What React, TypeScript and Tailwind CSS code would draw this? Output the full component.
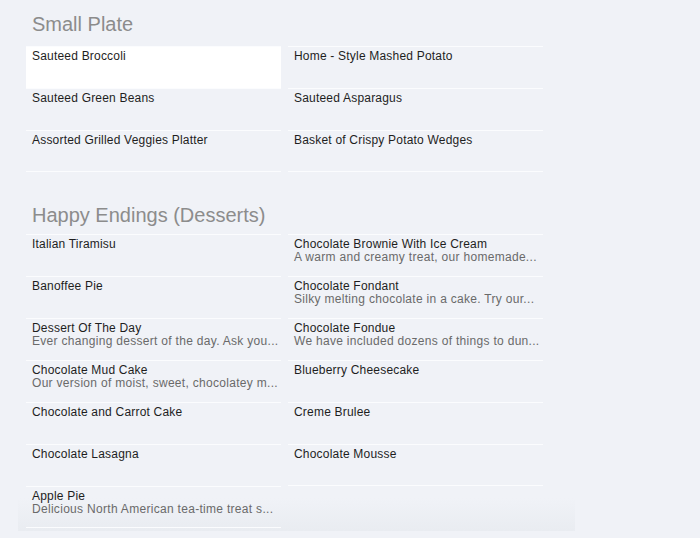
import React from "react";

type Item = { name: string; desc?: string };

const smallLeft: Item[] = [
  { name: "Sauteed Broccoli" },
  { name: "Sauteed Green Beans" },
  { name: "Assorted Grilled Veggies Platter" },
];
const smallRight: Item[] = [
  { name: "Home - Style Mashed Potato" },
  { name: "Sauteed Asparagus" },
  { name: "Basket of Crispy Potato Wedges" },
];
const dessertLeft: Item[] = [
  { name: "Italian Tiramisu" },
  { name: "Banoffee Pie" },
  { name: "Dessert Of The Day", desc: "Ever changing dessert of the day. Ask you..." },
  { name: "Chocolate Mud Cake", desc: "Our version of moist, sweet, chocolatey m..." },
  { name: "Chocolate and Carrot Cake" },
  { name: "Chocolate Lasagna" },
  { name: "Apple Pie", desc: "Delicious North American tea-time treat s..." },
];
const dessertRight: Item[] = [
  { name: "Chocolate Brownie With Ice Cream", desc: "A warm and creamy treat, our homemade..." },
  { name: "Chocolate Fondant", desc: "Silky melting chocolate in a cake. Try our..." },
  { name: "Chocolate Fondue", desc: "We have included dozens of things to dun..." },
  { name: "Blueberry Cheesecake" },
  { name: "Creme Brulee" },
  { name: "Chocolate Mousse" },
];

function Column({ items, highlightFirst }: { items: Item[]; highlightFirst?: boolean }) {
  return (
    <div className="flex w-[255px] flex-col">
      {items.map((it, i) => (
        <div
          key={it.name}
          className={
            "h-[42px] border-t border-[#fbfcfe] pl-[6px] pt-[2px] " +
            (i === items.length - 1 ? "border-b " : "") +
            (highlightFirst && i === 0 ? "bg-white" : "")
          }
        >
          <div className="whitespace-nowrap text-[12px] leading-[14px] tracking-[0.2px] text-[#1e1e1e]">{it.name}</div>
          {it.desc && (
            <div className="whitespace-nowrap text-[12px] leading-[13px] tracking-[0.3px] text-[#6a6a6a]">{it.desc}</div>
          )}
        </div>
      ))}
    </div>
  );
}

export default function App() {
  return (
    <div
      className="relative h-[538px] w-[700px] overflow-hidden bg-[#f0f2f7]"
      style={{ fontFamily: '"Liberation Sans", Arial, sans-serif' }}
    >
      <div className="pt-[12px]">
        <div className="pl-[32px] text-[20px] leading-[24px] text-[#8c8c8c]">Small Plate</div>
        <div className="mt-[10px] flex gap-[7px] pl-[26px]">
          <Column items={smallLeft} highlightFirst />
          <Column items={smallRight} />
        </div>
      </div>
      <div className="ml-[18px] mt-[31px] w-[557px] bg-[linear-gradient(to_bottom,transparent_90%,#e9ecf1)] pb-[3px]">
        <div className="pl-[14px] text-[20px] leading-[24px] text-[#8c8c8c]">Happy Endings (Desserts)</div>
        <div className="mt-[7px] flex gap-[7px] pl-[8px]">
          <Column items={dessertLeft} />
          <div className="self-start">
            <Column items={dessertRight} />
          </div>
        </div>
      </div>
    </div>
  );
}
